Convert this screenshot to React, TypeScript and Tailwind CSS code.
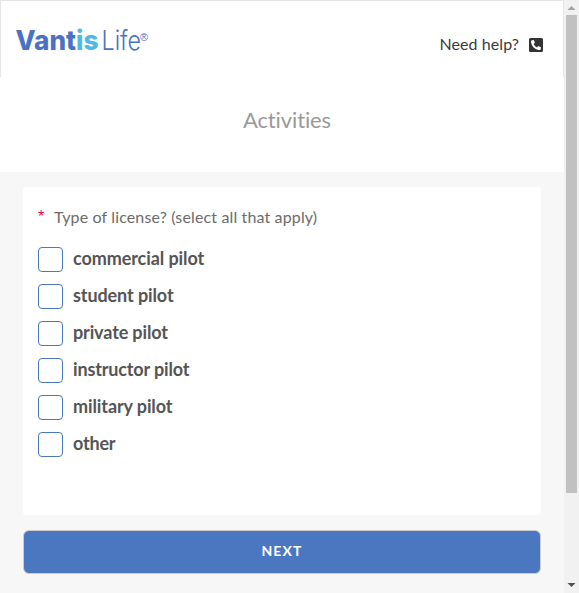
import React from "react";
import { FaPhoneSquareAlt } from "react-icons/fa";

const options = [
  { label: "commercial pilot", style: "tracking-[-0.08px]" },
  { label: "student pilot", style: "tracking-[-0.1px]" },
  { label: "private pilot", style: "tracking-[-0.13px]" },
  { label: "instructor pilot", style: "tracking-[-0.15px]" },
  { label: "military pilot", style: "tracking-[-0.1px]" },
  { label: "other", style: "tracking-[-0.2px]" },
];

function Logo() {
  return (
    <svg width="140" height="44" viewBox="0 0 140 44" role="img" aria-label="Vantis Life">
      <g fontFamily="Inter, sans-serif" fontSize="27.5">
        <text x="-0.5" y="34" fontWeight="800" fill="#4a72c4" textLength="60.5" lengthAdjust="spacingAndGlyphs">Vant</text>
        <text x="60" y="34" fontWeight="800" fill="#4fb9e3" textLength="22.5" lengthAdjust="spacingAndGlyphs">is</text>
        <text x="85.5" y="34" fontWeight="300" fill="#4a72c4" textLength="39.5" lengthAdjust="spacingAndGlyphs">Life</text>
      </g>
      <text x="124" y="25" fontFamily="'Liberation Sans', sans-serif" fontSize="10.5" fill="#4a72c4" textLength="8" lengthAdjust="spacingAndGlyphs">®</text>
    </svg>
  );
}

function Scrollbar() {
  return (
    <div className="flex h-full w-[15px] shrink-0 flex-col items-center bg-[#f1f1f1]">
      <svg className="h-[15px] w-[15px] shrink-0" viewBox="0 0 15 15">
        <path d="M3.5 10 7.5 6 11.5 10Z" fill="#a3a3a3" />
      </svg>
      <div className="h-[478px] w-[11px] bg-[#c1c1c1]" />
      <svg className="mt-auto h-[15px] w-[15px] shrink-0" viewBox="0 0 15 15">
        <path d="M3.5 5 7.5 9 11.5 5Z" fill="#505050" />
      </svg>
    </div>
  );
}

export default function App() {
  return (
    <div className="flex h-[593px] w-[579px] overflow-hidden bg-white font-['Lato',sans-serif] [font-variant-ligatures:none]">
      <div className="flex min-w-0 flex-1 flex-col bg-[#f7f7f7]">
        <header className="flex h-[77px] justify-between border-x border-t border-[#e5e5e5] bg-white pr-[19px] pl-[15px]">
          <div className="pt-[15px]"><Logo /></div>
          <a className="mt-[34px] flex h-[20px] items-center gap-[9px] text-[16px] text-[#3a3a3a]">
            <span className="-mt-0.5 tracking-[0.08px]">Need help?</span>
            <FaPhoneSquareAlt className="size-4 text-[#333]" />
          </a>
        </header>
        <div className="flex h-[95px] justify-center bg-white pt-[28px] pl-[10px]">
          <h1 className="text-[22px] leading-[30px] tracking-[-0.12px] text-[#999]">Activities</h1>
        </div>
        <main className="flex flex-col gap-[15px] px-[23px] pt-[15px]">
          <section className="h-[328px] rounded-[3px] bg-white px-[15px] pt-[19px]">
            <p className="flex h-[22px] items-center text-[16px] text-[#6b6b6b]">
              <span className="w-4 font-['Liberation_Sans',sans-serif] text-[#ff0040]">*</span>
              <span className="tracking-[0.14px]">Type of license? (select all that apply)</span>
            </p>
            <div className="mt-[19px] flex flex-col gap-3">
              {options.map((o) => (
                <label key={o.label} className="flex h-[25px] items-center gap-[10px]">
                  <span className="size-[25px] rounded-[4px] border border-[#4b77c1] bg-white" />
                  <span className={"-mt-[3px] text-[18px] leading-[24px] font-bold text-[#555] " + o.style}>{o.label}</span>
                </label>
              ))}
            </div>
          </section>
          <button className="h-[44px] rounded-[6px] border border-[#ccc] bg-[#4b77c1] pb-[3px] text-[14px] font-bold tracking-[1.1px] text-white">NEXT</button>
        </main>
      </div>
      <Scrollbar />
    </div>
  );
}
